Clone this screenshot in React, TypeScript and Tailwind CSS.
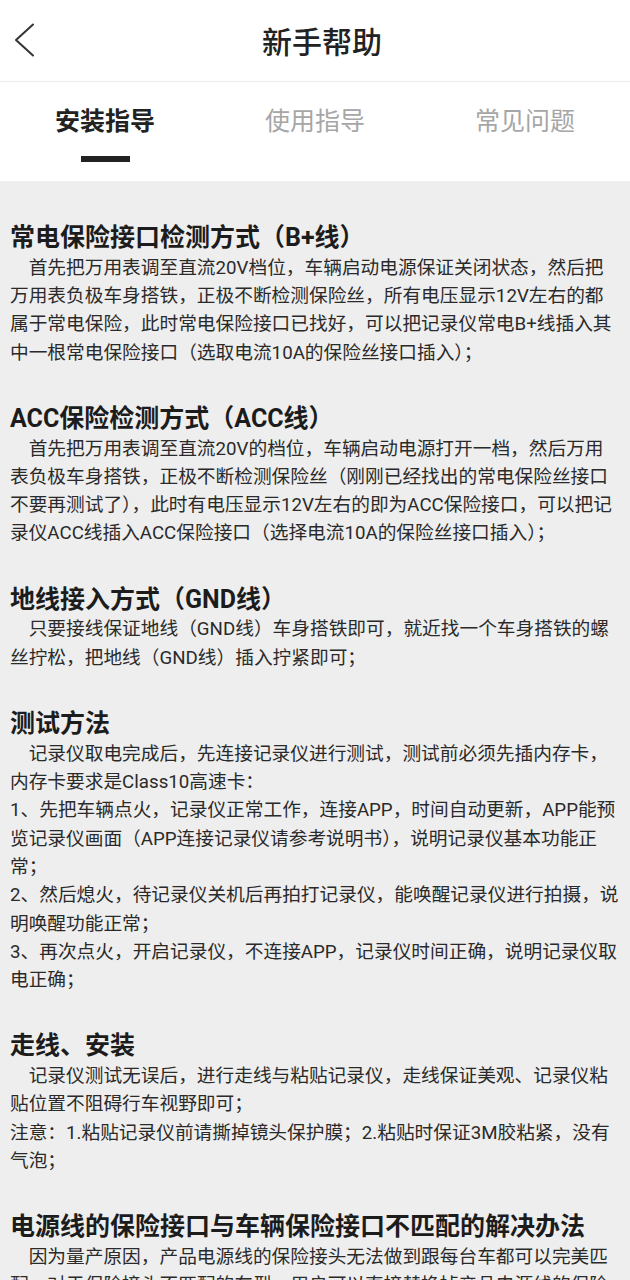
import React from "react";

const sections: { title: string; lines: string[] }[] = [
  {
    title: "常电保险接口检测方式（B+线）",
    lines: [
      "　首先把万用表调至直流20V档位，车辆启动电源保证关闭状态，然后把",
      "万用表负极车身搭铁，正极不断检测保险丝，所有电压显示12V左右的都",
      "属于常电保险，此时常电保险接口已找好，可以把记录仪常电B+线插入其",
      "中一根常电保险接口（选取电流10A的保险丝接口插入）；",
    ],
  },
  {
    title: "ACC保险检测方式（ACC线）",
    lines: [
      "　首先把万用表调至直流20V的档位，车辆启动电源打开一档，然后万用",
      "表负极车身搭铁，正极不断检测保险丝（刚刚已经找出的常电保险丝接口",
      "不要再测试了），此时有电压显示12V左右的即为ACC保险接口，可以把记",
      "录仪ACC线插入ACC保险接口（选择电流10A的保险丝接口插入）；",
    ],
  },
  {
    title: "地线接入方式（GND线）",
    lines: [
      "　只要接线保证地线（GND线）车身搭铁即可，就近找一个车身搭铁的螺",
      "丝拧松，把地线（GND线）插入拧紧即可；",
    ],
  },
  {
    title: "测试方法",
    lines: [
      "　记录仪取电完成后，先连接记录仪进行测试，测试前必须先插内存卡，",
      "内存卡要求是Class10高速卡：",
      "1、先把车辆点火，记录仪正常工作，连接APP，时间自动更新，APP能预",
      "览记录仪画面（APP连接记录仪请参考说明书），说明记录仪基本功能正",
      "常；",
      "2、然后熄火，待记录仪关机后再拍打记录仪，能唤醒记录仪进行拍摄，说",
      "明唤醒功能正常；",
      "3、再次点火，开启记录仪，不连接APP，记录仪时间正确，说明记录仪取",
      "电正确；",
    ],
  },
  {
    title: "走线、安装",
    lines: [
      "　记录仪测试无误后，进行走线与粘贴记录仪，走线保证美观、记录仪粘",
      "贴位置不阻碍行车视野即可；",
      "注意：1.粘贴记录仪前请撕掉镜头保护膜；2.粘贴时保证3M胶粘紧，没有",
      "气泡；",
    ],
  },
  {
    title: "电源线的保险接口与车辆保险接口不匹配的解决办法",
    lines: [
      "　因为量产原因，产品电源线的保险接头无法做到跟每台车都可以完美匹",
      "配，对于保险接头不匹配的车型，用户可以直接替换掉产品电源线的保险",
      "丝接头，选择与车辆保险盒相匹配的保险丝进行安装即可。",
    ],
  },
];

const font = { fontFamily: '"Roboto", "Noto Sans CJK SC", sans-serif' };

export default function App() {
  return (
    <div
      className="w-[630px] min-h-[1280px] bg-[#eeeeee] text-[#222222]"
      style={font}
    >
      {/* Header */}
      <div className="relative flex h-[82px] items-center justify-center bg-white border-b border-[#ececec] pl-[14px] pt-[4px]">
        <div className="absolute left-[13px] top-[23px]">
          <svg width="24" height="36" viewBox="0 0 24 36" fill="none">
            <path
              d="M20 1.5 L3 17 L20 32.5"
              stroke="#333333"
              strokeWidth="2"
              strokeLinecap="round"
              strokeLinejoin="round"
            />
          </svg>
        </div>
        <span className="text-[30px] font-medium leading-none text-[#222222]">
          新手帮助
        </span>
      </div>

      {/* Tabs */}
      <div className="flex h-[99px] bg-white">
        {["安装指导", "使用指导", "常见问题"].map((t, i) => (
          <div key={t} className="flex w-[210px] flex-col items-center">
            <span
              className={
                "mt-[25px] text-[25px] leading-[30px] " +
                (i === 0 ? "font-bold text-[#222222]" : "text-[#a6a6a6]")
              }
            >
              {t}
            </span>
            {i === 0 && (
              <div className="mt-[19px] h-[6px] w-[49px] bg-[#222222]" />
            )}
          </div>
        ))}
      </div>

      {/* Content */}
      <div className="flex flex-col gap-[32px] px-[10px] pt-[37px] pb-[40px]">
        {sections.map((s) => (
          <div key={s.title} className="flex flex-col">
            <div className="h-[35.7px] whitespace-nowrap pt-[5px] text-[25px] font-bold leading-[29.7px] text-[#1c1c1c]">
              {s.title}
            </div>
            {s.lines.map((l, idx) => (
              <div
                key={idx}
                className="h-[28.3px] whitespace-nowrap text-[18.7px] leading-[28.3px] text-[#2a2a2a]"
              >
                {l}
              </div>
            ))}
          </div>
        ))}
      </div>
    </div>
  );
}
